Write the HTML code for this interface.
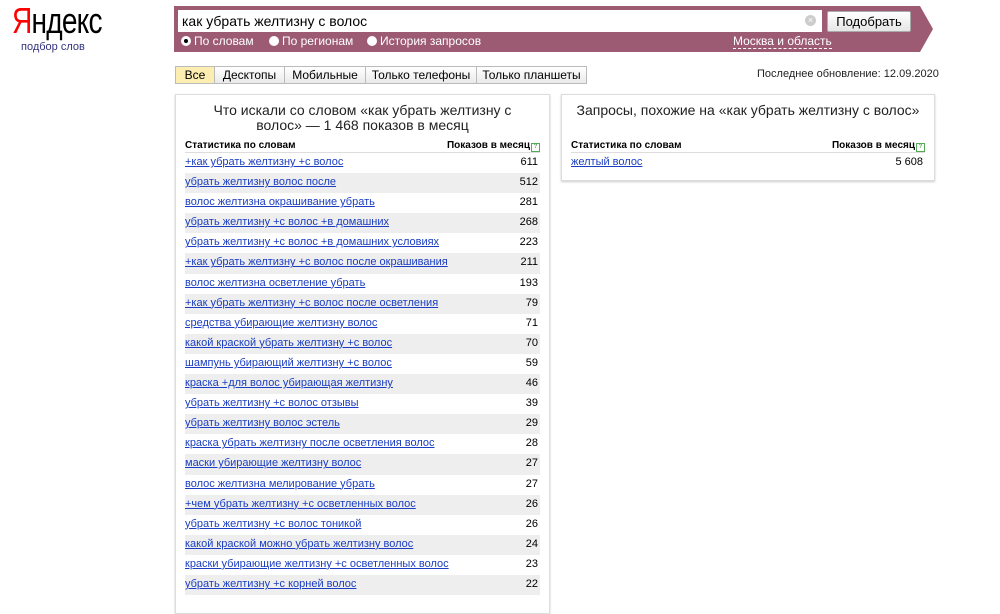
<!DOCTYPE html><html><head><meta charset="utf-8"><style>
body{margin:0;width:1000px;height:598px;overflow:hidden;background:#fff;font-family:"Liberation Sans",Arial,sans-serif;position:relative}
a{color:#1a3dc1}
.abs{position:absolute}
.logo{left:12px;top:0px;font-size:36px;letter-spacing:-1px;color:#000;transform:scaleX(.78);transform-origin:left}
.logo b{color:#f00;font-weight:normal}
.bar{left:174px;top:6px;width:746px;height:46px;background:#9c5b73}
.arrow{left:920px;top:6px;width:0;height:0;border-top:23px solid transparent;border-bottom:23px solid transparent;border-left:13px solid #9c5b73}
.inp{left:178px;top:10px;width:644px;height:22px;background:#fff;font-size:14px;line-height:22px;padding-left:4px;box-sizing:border-box}
.btn{left:827px;top:11px;width:84px;height:21px;background:linear-gradient(#fff,#e6e6e6);border:1px solid #aaa;box-sizing:border-box;font-size:13px;text-align:center;line-height:19px;border-radius:2px}
.rad{top:34px;font-size:12px;color:#fff;line-height:14px}
.rad i{display:inline-block;width:10px;height:10px;border-radius:50%;background:#fff;vertical-align:-1px;margin-right:3px;position:relative}
.rad i.on:after{content:"";position:absolute;left:3px;top:3px;width:4px;height:4px;border-radius:50%;background:#000}
.tabs{left:175px;top:66px;height:18px;display:flex;font-size:12px}
.tabs div{border:1px solid #bbb;border-left:none;background:linear-gradient(#fff,#eaeaea);line-height:16px;text-align:center;box-sizing:border-box;height:18px}
.tabs div:first-child{border-left:1px solid #bbb;background:#fbeeb0}
.panel{border:1px solid #ddd;box-shadow:0 1px 2px #ccc;box-sizing:border-box}
.h{font-size:14px;text-align:center;line-height:15px;color:#222}
.th{font-size:10px;font-weight:bold;display:flex;justify-content:space-between;border-bottom:1px solid #ddd;height:12px;line-height:11px}
.q{display:inline-block;width:7px;height:7px;border:1px solid #5a5;font-size:6px;line-height:7px;text-align:center;color:#5a5;margin-left:1px}
.row{height:20.1px;line-height:19px;font-size:11px;display:flex;justify-content:space-between;padding:0 2px 0 0}
.row:nth-child(even){background:#eee}
.row a{text-decoration:underline}
</style></head><body>
<div class="abs logo"><b>Я</b>ндекс</div>
<a class="abs" style="left:21px;top:41px;font-size:11px;color:#333380">подбор слов</a>
<div class="abs bar"></div><div class="abs arrow"></div>
<div class="abs inp">как убрать желтизну с волос</div>
<div class="abs" style="left:805px;top:15px;width:11px;height:11px;border-radius:50%;background:#ccc;color:#fff;font-size:9px;line-height:11px;text-align:center">×</div>
<div class="abs btn">Подобрать</div>
<div class="abs rad" style="left:181px"><i class="on"></i>По словам</div>
<div class="abs rad" style="left:269px"><i></i>По регионам</div>
<div class="abs rad" style="left:367px"><i></i>История запросов</div>
<div class="abs rad" style="left:733px;border-bottom:1px dashed #fff">Москва и область</div>
<div class="abs tabs"><div style="width:40px">Все</div><div style="width:70px">Десктопы</div><div style="width:81px">Мобильные</div><div style="width:111px">Только телефоны</div><div style="width:110px">Только планшеты</div></div>
<div class="abs" style="left:757px;top:68px;font-size:11px;color:#222">Последнее обновление: 12.09.2020</div>
<div class="abs panel" style="left:175px;top:94px;width:375px;height:520px">
<div class="h" style="margin-top:8px">Что искали со словом «как убрать желтизну с<br>волос» — 1 468 показов в месяц</div>
<div style="margin:7px 9px 0 9px">
<div class="th"><span>Статистика по словам</span><span>Показов в месяц<span class="q">?</span></span></div>
<div>
<div class="row"><a>+как убрать желтизну +с волос</a><span>611</span></div>
<div class="row"><a>убрать желтизну волос после</a><span>512</span></div>
<div class="row"><a>волос желтизна окрашивание убрать</a><span>281</span></div>
<div class="row"><a>убрать желтизну +с волос +в домашних</a><span>268</span></div>
<div class="row"><a>убрать желтизну +с волос +в домашних условиях</a><span>223</span></div>
<div class="row"><a>+как убрать желтизну +с волос после окрашивания</a><span>211</span></div>
<div class="row"><a>волос желтизна осветление убрать</a><span>193</span></div>
<div class="row"><a>+как убрать желтизну +с волос после осветления</a><span>79</span></div>
<div class="row"><a>средства убирающие желтизну волос</a><span>71</span></div>
<div class="row"><a>какой краской убрать желтизну +с волос</a><span>70</span></div>
<div class="row"><a>шампунь убирающий желтизну +с волос</a><span>59</span></div>
<div class="row"><a>краска +для волос убирающая желтизну</a><span>46</span></div>
<div class="row"><a>убрать желтизну +с волос отзывы</a><span>39</span></div>
<div class="row"><a>убрать желтизну волос эстель</a><span>29</span></div>
<div class="row"><a>краска убрать желтизну после осветления волос</a><span>28</span></div>
<div class="row"><a>маски убирающие желтизну волос</a><span>27</span></div>
<div class="row"><a>волос желтизна мелирование убрать</a><span>27</span></div>
<div class="row"><a>+чем убрать желтизну +с осветленных волос</a><span>26</span></div>
<div class="row"><a>убрать желтизну +с волос тоникой</a><span>26</span></div>
<div class="row"><a>какой краской можно убрать желтизну волос</a><span>24</span></div>
<div class="row"><a>краски убирающие желтизну +с осветленных волос</a><span>23</span></div>
<div class="row"><a>убрать желтизну +с корней волос</a><span>22</span></div>
</div></div></div>
<div class="abs panel" style="left:561px;top:94px;width:374px;height:87px">
<div class="h" style="margin-top:8px">Запросы, похожие на «как убрать желтизну с волос»</div>
<div style="margin:22px 9px 0 9px">
<div class="th"><span>Статистика по словам</span><span>Показов в месяц<span class="q">?</span></span></div>
<div class="row" style="background:#fff"><a>желтый волос</a><span>5 608</span></div>
</div></div>
</body></html>
